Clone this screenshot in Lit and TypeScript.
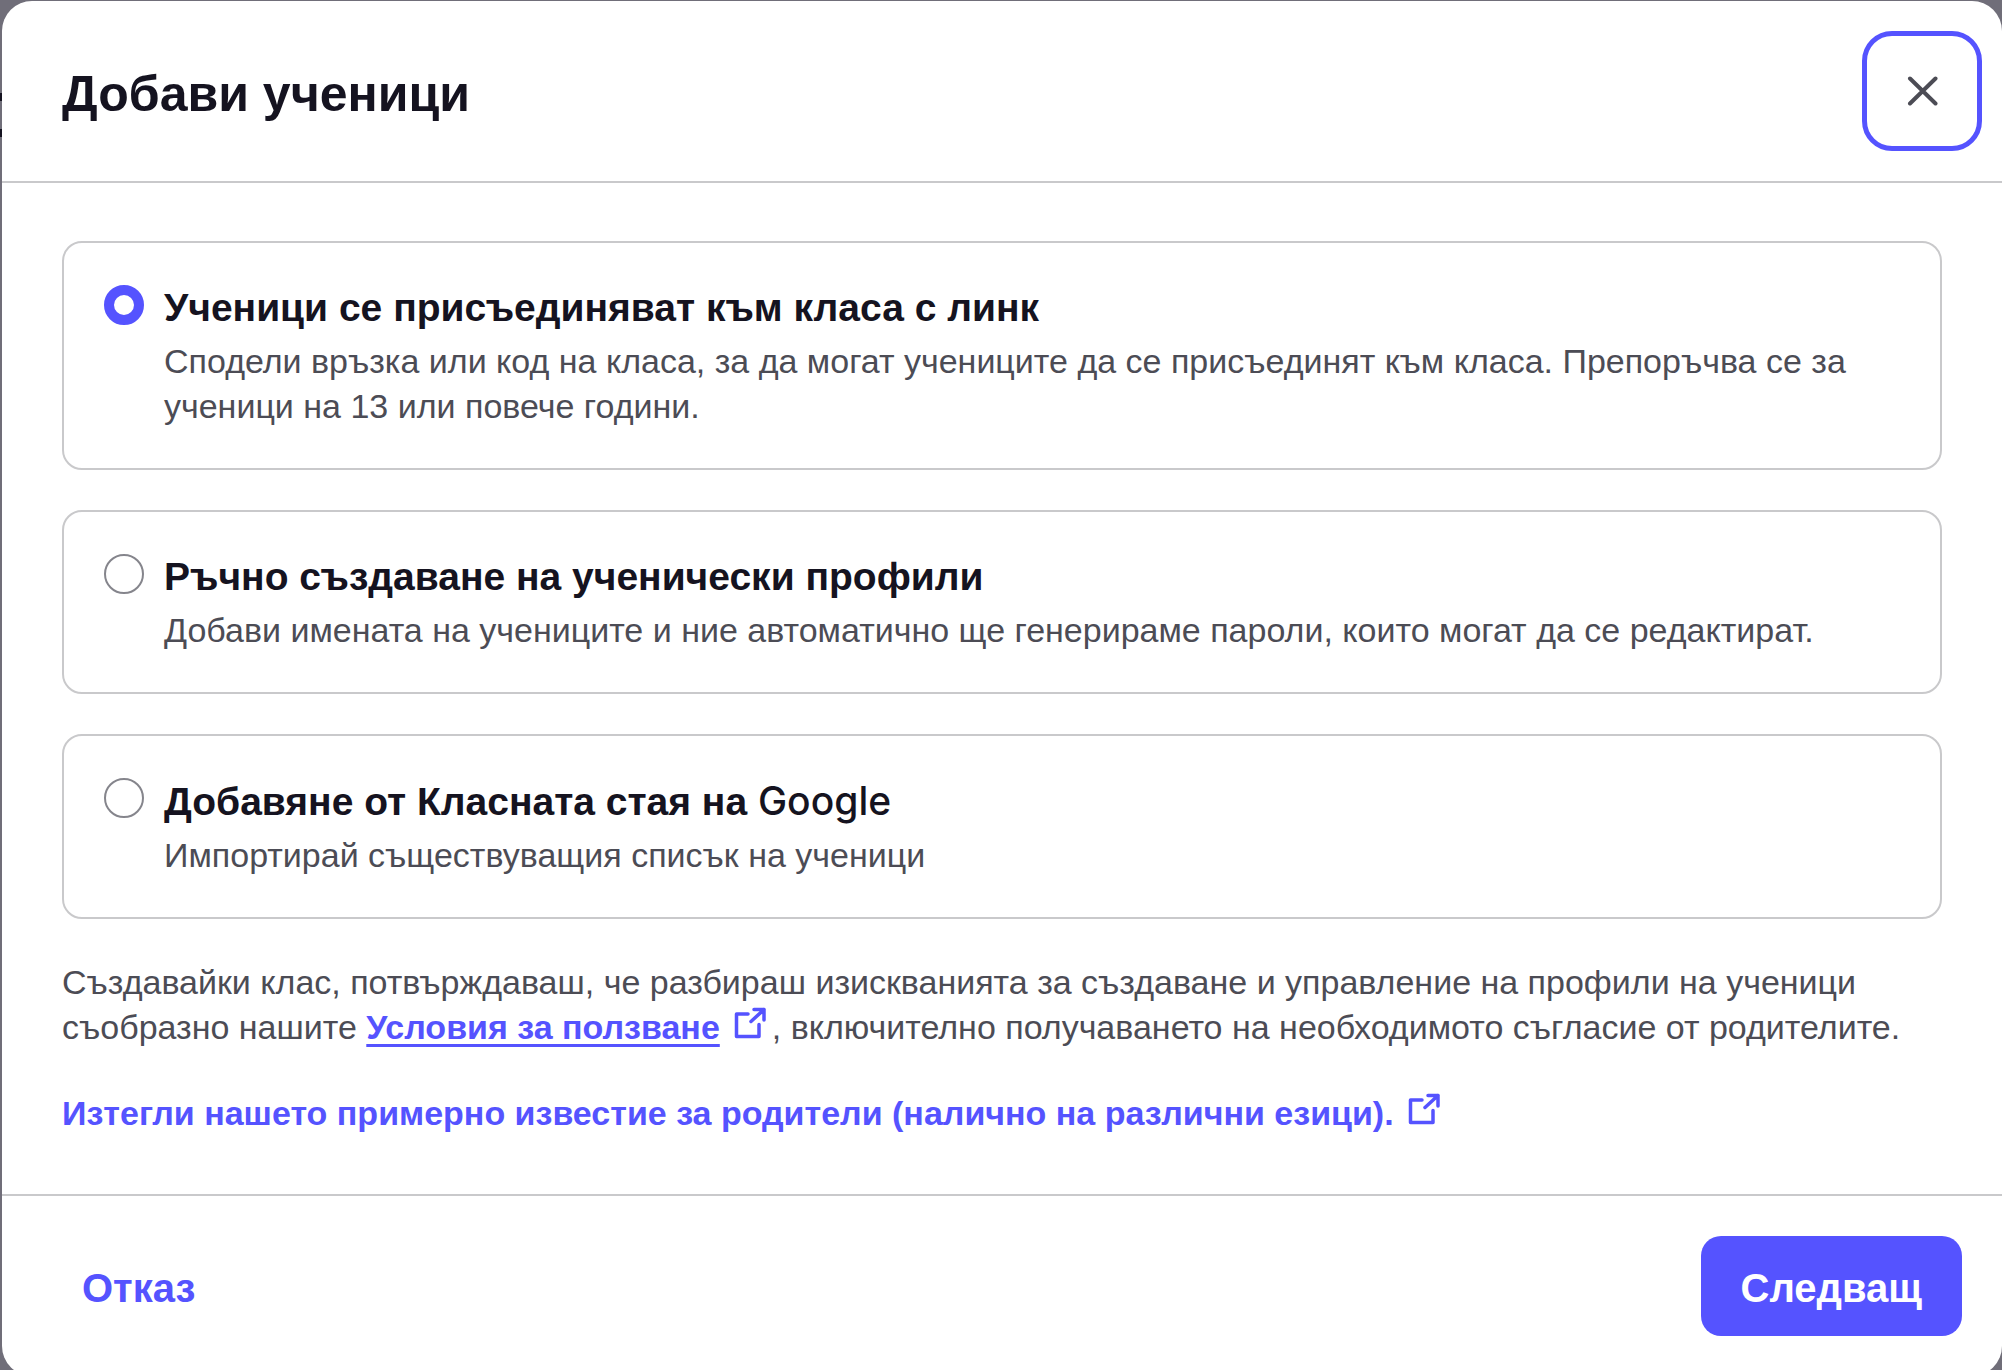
import { LitElement, html, css, svg } from "lit";
import { customElement, state, property } from "lit/decorators.js";

interface Option {
  id: string;
  title: string;
  brand?: string;
  text: string;
}

const OPTIONS: Option[] = [
  {
    id: "link",
    title: "Ученици се присъединяват към класа с линк",
    text: "Сподели връзка или код на класа, за да могат учениците да се присъединят към класа. Препоръчва се за ученици на 13 или повече години.",
  },
  {
    id: "manual",
    title: "Ръчно създаване на ученически профили",
    text: "Добави имената на учениците и ние автоматично ще генерираме пароли, които могат да се редактират.",
  },
  {
    id: "google",
    title: "Добавяне от Класната стая на",
    brand: "Google",
    text: "Импортирай съществуващия списък на ученици",
  },
];

const closeIcon = html`<svg viewBox="0 0 32 32" aria-hidden="true">
  ${svg`<path d="M4 3.5 29.5 28.5M29.5 3.5 4 28.5" fill="none" stroke="currentColor" stroke-width="4" stroke-linecap="round"/>`}
</svg>`;

const externalIcon = html`<svg class="ext" viewBox="0 0 32 32" aria-hidden="true">
  ${svg`<path d="M14 7H2.5V29.5H25V17.5M20 2.5H30V13M30 2.5 17 14.5" fill="none" stroke="currentColor" stroke-width="3.5" stroke-linecap="round" stroke-linejoin="round"/>`}
</svg>`;

@customElement("option-card")
export class OptionCard extends LitElement {
  static styles = css`
    :host { display: block; }
    .card {
      display: grid;
      grid-template-columns: 40px 1fr;
      column-gap: 20px;
      padding: 40px 40px 39px;
      border: 2px solid #c9c9cb;
      border-radius: 20px;
      cursor: pointer;
    }
    .radio {
      appearance: none;
      box-sizing: border-box;
      width: 40px;
      height: 40px;
      margin: 2px 0 0;
      border: 2px solid #85858c;
      border-radius: 50%;
      background: #fff;
    }
    .radio:checked { border: 10px solid #5553ff; }
    .title {
      display: block;
      margin-bottom: 6px;
      font-size: 39px;
      line-height: 50px;
      font-weight: 700;
      color: #151320;
    }
    .brand { font-family: Inter, "Liberation Sans", sans-serif; font-weight: 500; }
    .text { display: block; font-size: 34px; line-height: 45px; color: #4c4c55; }
  `;
  @property({ attribute: false }) option!: Option;
  @property({ type: Boolean }) checked = false;

  private pick() {
    this.dispatchEvent(new CustomEvent("pick", { detail: this.option.id }));
  }

  render() {
    const { id, title, brand, text } = this.option;
    return html`<label class="card" for=${id}>
      <input class="radio" type="radio" id=${id} name="method" .checked=${this.checked} @change=${this.pick} />
      <span>
        <span class="title">${title}${brand ? html` <span class="brand">${brand}</span>` : ""}</span>
        <span class="text">${text}</span>
      </span>
    </label>`;
  }
}

@customElement("app-root")
export class AppRoot extends LitElement {
  static styles = css`
    :host {
      display: block;
      box-sizing: border-box;
      height: 100vh;
      overflow: hidden;
      padding: 1px 0 0 2px;
      background:
        linear-gradient(#151320, #151320) 0 93px / 2px 8px no-repeat,
        linear-gradient(#151320, #151320) 0 129px / 2px 8px no-repeat,
        #706e79;
      font-family: "Liberation Sans", Arial, sans-serif;
      color: #4c4c55;
    }
    .dialog { background: #fff; border-radius: 30px; }
    .head {
      display: flex;
      align-items: center;
      justify-content: space-between;
      padding: 30px 20px 30px 60px;
      border-bottom: 2px solid #c9c9cb;
    }
    .heading { margin: 0; padding-top: 5px; font-size: 50px; line-height: 60px; color: #151320; }
    .close {
      display: grid;
      place-items: center;
      width: 120px;
      height: 120px;
      padding: 0;
      border: 5px solid #5553ff;
      border-radius: 30px;
      background: #fff;
      color: #4c4c55;
    }
    .close svg { width: 32px; height: 32px; }
    .body { padding: 58px 60px; }
    .options { display: grid; gap: 40px; }
    .note { margin: 41px 0 0; font-size: 34px; line-height: 45px; }
    .link { color: #5553ff; font-weight: 700; text-decoration: none; }
    .underlined {
      text-decoration: underline 3px;
      text-underline-offset: 5px;
      text-decoration-skip-ink: none;
    }
    .ext { width: 32px; height: 32px; margin: 0 6px 0 14px; }
    .foot {
      display: flex;
      align-items: center;
      justify-content: space-between;
      padding: 40px 40px 40px 60px;
      border-top: 2px solid #c9c9cb;
    }
    .button {
      height: 100px;
      padding: 4px 40px 0;
      border: 0;
      border-radius: 20px;
      background: #5553ff;
      color: #fff;
      font: 700 40px/50px "Liberation Sans", Arial, sans-serif;
    }
    .plain { padding: 4px 20px 0; background: none; color: #5553ff; }
  `;

  @state() private selected = "link";

  render() {
    return html`<section class="dialog" role="dialog" aria-labelledby="heading">
      <header class="head">
        <h1 class="heading" id="heading">Добави ученици</h1>
        <button class="close" aria-label="Затвори">${closeIcon}</button>
      </header>
      <div class="body">
        <div class="options" role="radiogroup" aria-labelledby="heading">
          ${OPTIONS.map(
            (o) => html`<option-card
              .option=${o}
              .checked=${this.selected === o.id}
              @pick=${(e: CustomEvent<string>) => (this.selected = e.detail)}
            ></option-card>`,
          )}
        </div>
        <p class="note">
          Създавайки клас, потвърждаваш, че разбираш изискванията за създаване и управление на профили на ученици съобразно нашите
          <a class="link" href="#terms"><span class="underlined">Условия за ползване</span>${externalIcon}</a>, включително получаването на необходимото съгласие от родителите.
        </p>
        <p class="note">
          <a class="link" href="#notice">Изтегли нашето примерно известие за родители (налично на различни езици).${externalIcon}</a>
        </p>
      </div>
      <footer class="foot">
        <button class="button plain">Отказ</button>
        <button class="button">Следващ</button>
      </footer>
    </section>`;
  }
}
